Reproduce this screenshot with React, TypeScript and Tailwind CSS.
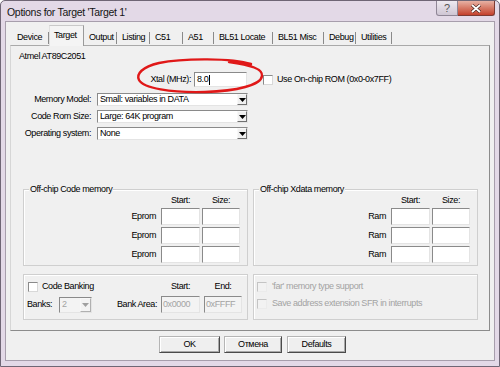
import React from 'react';

const font = "font-['Liberation_Sans',Arial,sans-serif]";
const txt = 'text-[9px] leading-[11px] tracking-[-0.4px] whitespace-nowrap';

const sunken =
  'border border-t-[#8a8a8a] border-l-[#8a8a8a] border-b-[#e4e4e4] border-r-[#e4e4e4]';

function Arrow({ gray }: { gray?: boolean }) {
  return (
    <svg width="7" height="4" viewBox="0 0 7 4">
      <path d="M0 0 H7 L3.5 4 Z" fill={gray ? '#a0a0a0' : '#000'} />
    </svg>
  );
}

function Select({ value }: { value: string }) {
  return (
    <div className={`ml-[6px] w-[151px] h-[13px] ${sunken} bg-white flex items-center`}>
      <span className={`flex-1 pl-[2px] overflow-hidden ${txt}`}>{value}</span>
      <div className="w-[10px] h-[11px] bg-[#f0f0f0] border border-t-[#f8f8f8] border-l-[#f8f8f8] border-b-[#707070] border-r-[#707070] flex items-center justify-center">
        <Arrow />
      </div>
    </div>
  );
}

function Box({ w, children, disabled }: { w: string; children?: React.ReactNode; disabled?: boolean }) {
  return (
    <div
      className={`${w} h-[17px] ${sunken} ${disabled ? 'bg-[#f3f3f3] text-[#a3a3a3]' : 'bg-white'} flex items-center pl-[1px] ${txt}`}
    >
      {children}
    </div>
  );
}

function Check({ disabled }: { disabled?: boolean }) {
  return (
    <div
      className={`w-[10px] h-[10px] shrink-0 border ${
        disabled
          ? 'border-t-[#c4c4c4] border-l-[#c4c4c4] border-b-[#ebebeb] border-r-[#ebebeb] bg-[#f2f2f2]'
          : 'border-t-[#8a8a8a] border-l-[#8a8a8a] border-b-[#d8d8d8] border-r-[#d8d8d8] bg-white'
      }`}
    />
  );
}

function Group({ title, children, className }: { title?: string; children: React.ReactNode; className: string }) {
  return (
    <div className={`relative border border-[#cfcfcf] shadow-[inset_1px_1px_0_#ffffff] ${className}`}>
      {title && (
        <span className={`absolute left-[5px] top-[-6px] px-[1px] bg-[#f0f0f0] ${txt}`}>{title}</span>
      )}
      {children}
    </div>
  );
}

function MemGroup({ title, label }: { title: string; label: string }) {
  return (
    <Group title={title} className="w-[225px] h-[77px] flex flex-col">
      <div className={`mt-[5px] h-[11px] flex justify-end pr-[7px] ${txt}`}>
        <span className="w-[39px] text-center">Start:</span>
        <span className="ml-[2px] w-[38px] text-center">Size:</span>
      </div>
      <div className="mt-[2px] flex flex-col gap-[2px] pr-[7px]">
        {[0, 1, 2].map((i) => (
          <div key={i} className="flex items-center justify-end">
            <span className={`mr-[5px] ${txt}`}>{label}</span>
            <Box w="w-[39px]" />
            <div className="ml-[2px]">
              <Box w="w-[38px]" />
            </div>
          </div>
        ))}
      </div>
    </Group>
  );
}

const tabs = [
  { n: 'Device', w: 'w-[37px]' },
  { n: 'Target', w: 'w-[35px]', sel: true },
  { n: 'Output', w: 'w-[33px]' },
  { n: 'Listing', w: 'w-[33px]' },
  { n: 'C51', w: 'w-[33px]' },
  { n: 'A51', w: 'w-[31px]' },
  { n: 'BL51 Locate', w: 'w-[59px]' },
  { n: 'BL51 Misc', w: 'w-[51px]' },
  { n: 'Debug', w: 'w-[32px]' },
  { n: 'Utilities', w: 'w-[36px]' },
];

function Btn({ w, children }: { w: string; children: React.ReactNode }) {
  return (
    <div
      className={`${w} h-[17px] bg-[#efefef] border border-t-[#b5b5b5] border-l-[#b5b5b5] border-b-[#4a4a4a] border-r-[#4a4a4a] shadow-[inset_1px_1px_0_#ffffff,inset_-1px_-1px_0_#a8a8a8] flex items-center justify-center ${txt}`}
    >
      {children}
    </div>
  );
}

export default function App() {
  return (
    <div className={`w-[500px] h-[367px] ${font} text-black`}>
      <div className="w-[500px] h-[367px] flex flex-col bg-[#e3d9e7] border border-[#6f6675] rounded-t-[5px]">
        {/* title bar */}
        <div className="h-[20px] shrink-0 flex items-start">
          <span className="ml-[6px] mt-[5px] text-[10.5px] leading-[12px] tracking-[-0.3px] text-[#141414] whitespace-nowrap">
            Options for Target 'Target 1'
          </span>
          <div className="ml-auto mr-[4px] flex">
            <div className="w-[22px] h-[15px] rounded-bl-[3px] border border-t-0 border-[#8f8696] bg-gradient-to-b from-[#eee9f0] to-[#cfc6d4] flex items-center justify-center text-[11px] leading-[11px] text-[#555]">
              ?
            </div>
            <div className="w-[37px] h-[15px] rounded-br-[3px] border border-t-0 border-l-0 border-[#7d3b33] bg-gradient-to-b from-[#e7b1a4] via-[#d67966] to-[#c33f2c] flex items-center justify-center">
              <svg width="10" height="9" viewBox="0 0 10 9">
                <path d="M1 1 L9 8 M9 1 L1 8" stroke="#3a1a16" strokeWidth="3" />
                <path d="M1 1 L9 8 M9 1 L1 8" stroke="#ffffff" strokeWidth="1.8" />
              </svg>
            </div>
          </div>
        </div>

        {/* client */}
        <div className="flex-1 mx-[4px] mb-[5px] border border-[#a79eac] bg-[#f0f0f0] flex flex-col">
          {/* tab strip */}
          <div className="pl-[6px] pt-[3px] h-[23px] flex items-end">
            {tabs.map((t) =>
              t.sel ? (
                <div
                  key={t.n}
                  className={`${t.w} h-[21px] -mb-px z-10 bg-[#f4f4f4] border border-b-0 border-t-[#c9c9c9] border-l-[#e0e0e0] border-r-[#9a9a9a] flex items-start pt-[4px] pl-[4px] ${txt}`}
                >
                  {t.n}
                </div>
              ) : (
                <div key={t.n} className={`${t.w} h-[17px] flex items-center`}>
                  <span className={`flex-1 pl-[5px] pt-[2px] ${txt}`}>{t.n}</span>
                  <div className="w-px h-[12px] mt-[2px] bg-[#8a8a8a]" />
                </div>
              )
            )}
          </div>

          {/* panel */}
          <div className="relative ml-[4px] w-[480px] h-[286px] border border-t-[#a9a9a9] border-l-[#d6d6d6] border-b-[#8c8c8c] border-r-[#8c8c8c] bg-[#f0f0f0] flex flex-col">
            <div className={`ml-[8px] mt-[5px] h-[12px] ${txt}`}>Atmel AT89C2051</div>

            <div className="mt-[9px] h-[15px] flex items-center">
              <span className={`w-[180px] text-right ${txt}`}>Xtal (MHz):</span>
              <div className={`ml-[3px] w-[53px] h-[15px] ${sunken} bg-white flex items-center pl-[2px] ${txt}`}>
                8.0<span className="ml-[1px] w-px h-[10px] bg-black" />
              </div>
              <div className="ml-[16px]">
                <Check />
              </div>
              <span className={`ml-[4px] ${txt}`}>Use On-chip ROM (0x0-0x7FF)</span>
            </div>

            <div className="mt-[6px] flex flex-col gap-[4px]">
              {[
                ['Memory Model:', 'Small: variables in DATA'],
                ['Code Rom Size:', 'Large: 64K program'],
                ['Operating system:', 'None'],
              ].map(([l, v]) => (
                <div key={l} className="h-[13px] flex items-center">
                  <span className={`w-[80px] text-right ${txt}`}>{l}</span>
                  <Select value={v} />
                </div>
              ))}
            </div>

            <div className="mt-[49px] ml-[12px] flex gap-[5px]">
              <MemGroup title="Off-chip Code memory" label="Eprom" />
              <MemGroup title="Off-chip Xdata memory" label="Ram" />
            </div>

            <div className="mt-[8px] ml-[12px] flex gap-[5px]">
              <Group className="w-[225px] h-[46px] flex flex-col">
                <div className="mt-[6px] h-[11px] flex items-center pr-[5px]">
                  <div className="ml-[4px]">
                    <Check />
                  </div>
                  <span className={`ml-[4px] ${txt}`}>Code Banking</span>
                  <div className={`ml-auto flex ${txt}`}>
                    <span className="w-[39px] text-center">Start:</span>
                    <span className="ml-[4px] w-[38px] text-center">End:</span>
                  </div>
                </div>
                <div className="mt-[4px] h-[17px] flex items-center pr-[5px]">
                  <span className={`ml-[3px] w-[31px] ${txt}`}>Banks:</span>
                  <div className={`ml-[1px] w-[33px] h-[16px] ${sunken} bg-[#f3f3f3] flex items-center`}>
                    <span className={`flex-1 pl-[2px] text-[#a3a3a3] ${txt}`}>2</span>
                    <div className="w-[11px] h-[14px] border border-t-[#f8f8f8] border-l-[#f8f8f8] border-b-[#b0b0b0] border-r-[#b0b0b0] flex items-center justify-center">
                      <Arrow gray />
                    </div>
                  </div>
                  <div className="ml-auto flex items-center">
                    <span className={`mr-[4px] ${txt}`}>Bank Area:</span>
                    <Box w="w-[39px]" disabled>
                      0x0000
                    </Box>
                    <div className="ml-[4px]">
                      <Box w="w-[38px]" disabled>
                        0xFFFF
                      </Box>
                    </div>
                  </div>
                </div>
              </Group>
              <Group className="w-[225px] h-[46px] flex flex-col">
                <div className="mt-[6px] h-[11px] flex items-center">
                  <div className="ml-[3px]">
                    <Check disabled />
                  </div>
                  <span className={`ml-[5px] text-[#a3a3a3] ${txt}`}>'far' memory type support</span>
                </div>
                <div className="mt-[6px] h-[11px] flex items-center">
                  <div className="ml-[3px]">
                    <Check disabled />
                  </div>
                  <span className={`ml-[5px] text-[#a3a3a3] ${txt}`}>Save address extension SFR in interrupts</span>
                </div>
              </Group>
            </div>

            {/* red annotation ellipse */}
            <svg className="absolute left-[122px] top-[11px]" width="140" height="40" viewBox="0 0 140 40">
              <path
                d="M118 7 C 100 1, 50 1, 26 6 C 9 10, 3 17, 6 23 C 10 31, 38 36, 72 35 C 104 34, 128 28, 129 19 C 130 12, 118 8, 96 5"
                fill="none"
                stroke="#e01818"
                strokeWidth="2.4"
                strokeLinecap="round"
              />
            </svg>
          </div>

          {/* buttons */}
          <div className="mt-[5px] ml-[153px] flex">
            <Btn w="w-[61px]">OK</Btn>
            <div className="ml-[4px]">
              <Btn w="w-[58px]">Отмена</Btn>
            </div>
            <div className="ml-[5px]">
              <Btn w="w-[59px]">Defaults</Btn>
            </div>
          </div>
        </div>
      </div>
    </div>
  );
}
